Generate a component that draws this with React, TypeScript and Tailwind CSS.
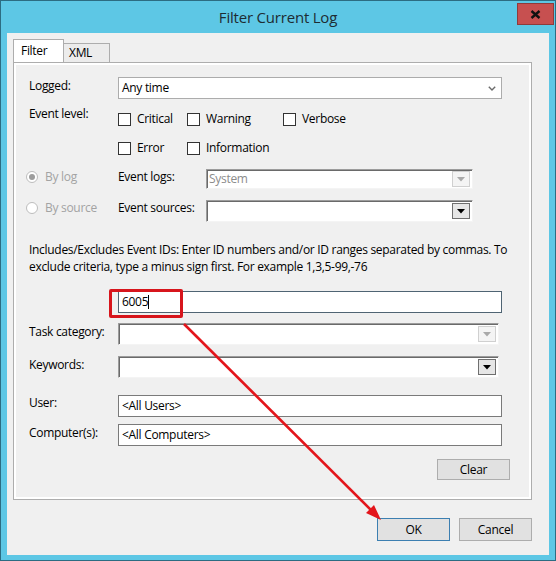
import React from "react";

// small down triangle used in the classic combo buttons
const Tri = ({ color }: { color: string }) => (
  <svg width="8" height="5" viewBox="0 0 8 5">
    <path d="M0 0 H8 L4 4.5 Z" fill={color} />
  </svg>
);

const ComboButton = ({ disabled }: { disabled?: boolean }) => (
  <div
    className={
      "w-[18px] h-[16px] flex items-center justify-center border " +
      (disabled ? "border-[#d0d0d0] bg-[#f4f4f4]" : "border-[#6f6f6f] bg-[#e6e6e6]")
    }
  >
    <Tri color={disabled ? "#a9a9a9" : "#000"} />
  </div>
);

// sunken (3D) combo box like the old WinForms control
const Combo = ({
  width,
  height,
  text,
  disabled,
}: {
  width: string;
  height: string;
  text?: string;
  disabled?: boolean;
}) => (
  <div
    className={
      width +
      " " +
      height +
      " flex items-center justify-between bg-white border-t border-l border-t-[#9c9c9c] border-l-[#9c9c9c] border-r border-b border-r-[#f4f4f4] border-b-[#f4f4f4] shadow-[inset_1px_1px_0_#6a6a6a] pl-[2px] pr-[2px]"
    }
  >
    <span className="text-[#8c8c8c]">{text}</span>
    <ComboButton disabled={disabled} />
  </div>
);

const Check = ({ label, w }: { label: string; w: string }) => (
  <div className={"flex items-center gap-[6px] " + w}>
    <div className="w-[13px] h-[13px] border border-[#333] bg-white shrink-0" />
    <span>{label}</span>
  </div>
);

const TextBox = ({ children, focus }: { children?: React.ReactNode; focus?: boolean }) => (
  <div
    className={
      "w-[384px] h-[22px] bg-white border flex items-center px-[3px] " +
      (focus ? "border-[#4f6473]" : "border-[#7a7a7a]")
    }
  >
    {children}
  </div>
);

const WinButton = ({ label, primary }: { label: string; primary?: boolean }) => (
  <button
    className={
      "w-[73px] h-[23px] bg-[#e1e1e1] border flex items-center justify-center " +
      (primary ? "border-[#3c7fb1]" : "border-[#adadad]")
    }
  >
    {label}
  </button>
);

export default function App() {
  return (
    <div className="w-[556px] h-[561px] bg-[#5dc7e5] border border-[#2c6c82] flex flex-col relative overflow-hidden text-[12px] text-black font-['Segoe_UI','Open_Sans',sans-serif] tracking-[-0.3px]">
      {/* -- TITLE BAR -- */}
      <div className="h-[32px] relative flex items-center justify-center">
        <span className="text-[15px] text-[#1d2c33] tracking-[-0.2px]">Filter Current Log</span>
        <button className="absolute right-[1px] top-[2px] w-[37px] h-[22px] bg-[#c75050] border border-[#8f3b3b] flex items-center justify-center">
          <svg width="11" height="9" viewBox="0 0 11 9">
            <path d="M1.5 1 L9.5 8 M9.5 1 L1.5 8" stroke="#111" strokeWidth="2.4" />
          </svg>
        </button>
      </div>

      {/* -- CLIENT AREA -- */}
      <div className="flex-1 ml-[6px] mr-[6px] mb-[5px] bg-[#f0f0f0] pl-[6px] pr-[17px] pt-[7px] flex flex-col">
        {/* tabs */}
        <div className="flex items-end h-[22px] relative z-10">
          <div className="w-[51px] h-[23px] bg-white border border-b-0 border-[#adadad] pl-[7px] pt-[2px]">
            Filter
          </div>
          <div className="w-[46px] h-[19px] bg-[#ececec] border border-l-0 border-b-0 border-[#adadad] pl-[5px]">
            XML
          </div>
        </div>

        {/* panel */}
        <div className="h-[438px] border border-[#adadad] bg-white p-[2px]">
          <div className="h-full bg-[#f0f0f0] pl-[13px] pr-[19px] pt-[12px] flex flex-col">
            {/* Logged */}
            <div className="flex items-center h-[22px]">
              <span className="w-[89px] -mt-[5px]">Logged:</span>
              <div className="w-[384px] h-[22px] bg-white border border-[#acacac] flex items-center justify-between pl-[3px] pr-[5px]">
                <span>Any time</span>
                <svg width="8" height="5" viewBox="0 0 8 5">
                  <path d="M0.8 0.8 L4 4 L7.2 0.8" stroke="#6b6b6b" strokeWidth="1.4" fill="none" />
                </svg>
              </div>
            </div>

            {/* Event level */}
            <div className="flex mt-[10px]">
              <span className="w-[89px] -mt-[4px]">Event level:</span>
              <div className="flex flex-col gap-[9px]">
                <div className="flex items-center h-[20px]">
                  <Check label="Critical" w="w-[69px]" />
                  <Check label="Warning" w="w-[96px]" />
                  <Check label="Verbose" w="w-[80px]" />
                </div>
                <div className="flex items-center h-[20px]">
                  <Check label="Error" w="w-[69px]" />
                  <Check label="Information" w="w-[96px]" />
                </div>
              </div>
            </div>

            {/* By log */}
            <div className="flex items-center h-[20px] mt-[11px] -ml-[3px]">
              <div className="w-[92px] flex items-center gap-[7px] text-[#a3a3a3] -mt-[5px]">
                <div className="w-[12px] h-[12px] rounded-full border border-[#bdbdbd] bg-white flex items-center justify-center">
                  <div className="w-[6px] h-[6px] rounded-full bg-[#9d9d9d]" />
                </div>
                <span>By log</span>
              </div>
              <span className="w-[88px] -mt-[4px]">Event logs:</span>
              <Combo width="w-[267px]" height="h-[20px]" text="System" disabled />
            </div>

            {/* By source */}
            <div className="flex items-center h-[22px] mt-[11px] -ml-[3px]">
              <div className="w-[92px] flex items-center gap-[7px] text-[#a3a3a3] -mt-[7px]">
                <div className="w-[12px] h-[12px] rounded-full border border-[#bdbdbd] bg-white" />
                <span>By source</span>
              </div>
              <span className="w-[88px] -mt-[7px]">Event sources:</span>
              <Combo width="w-[267px]" height="h-[22px]" />
            </div>

            {/* description */}
            <p className="mt-[19px] leading-[17px] whitespace-nowrap">
              Includes/Excludes Event IDs: Enter ID numbers and/or ID ranges separated by commas. To
              <br />
              exclude criteria, type a minus sign first. For example 1,3,5-99,-76
            </p>

            {/* event id */}
            <div className="flex items-center mt-[16px]">
              <span className="w-[89px]" />
              <TextBox focus>
                <span>6005</span>
                <span className="w-px h-[14px] bg-black" />
              </TextBox>
            </div>

            {/* Task category */}
            <div className="flex items-center h-[22px] mt-[10px]">
              <span className="w-[89px] -mt-[5px]">Task category:</span>
              <Combo width="w-[381px]" height="h-[22px]" disabled />
            </div>

            {/* Keywords */}
            <div className="flex items-center h-[22px] mt-[11px]">
              <span className="w-[89px] -mt-[5px]">Keywords:</span>
              <Combo width="w-[381px]" height="h-[22px]" />
            </div>

            {/* User */}
            <div className="flex items-center mt-[17px]">
              <span className="w-[89px] -mt-[6px]">User:</span>
              <TextBox>&lt;All Users&gt;</TextBox>
            </div>

            {/* Computer */}
            <div className="flex items-center mt-[7px]">
              <span className="w-[89px] -mt-[4px]">Computer(s):</span>
              <TextBox>&lt;All Computers&gt;</TextBox>
            </div>

            <div className="flex justify-end mt-[13px]">
              <button className="w-[73px] h-[21px] bg-[#e1e1e1] border border-[#adadad]">Clear</button>
            </div>
          </div>
        </div>

        {/* -- FOOTER BUTTONS -- */}
        <div className="flex justify-end gap-[9px] mt-[18px]">
          <WinButton label="OK" primary />
          <WinButton label="Cancel" />
        </div>
      </div>

      {/* -- ANNOTATIONS (overlay) -- */}
      <div className="absolute left-[108px] top-[288px] w-[74px] h-[29px] border-[3px] border-[#d7151c] rounded-[2px] pointer-events-none" />
      <svg className="absolute left-0 top-0 pointer-events-none" width="556" height="561">
        <line x1="183" y1="323" x2="371" y2="510" stroke="#e3151b" strokeWidth="2.6" />
        <polygon points="380,519 365,512 373,504" fill="#e3151b" />
      </svg>
    </div>
  );
}
